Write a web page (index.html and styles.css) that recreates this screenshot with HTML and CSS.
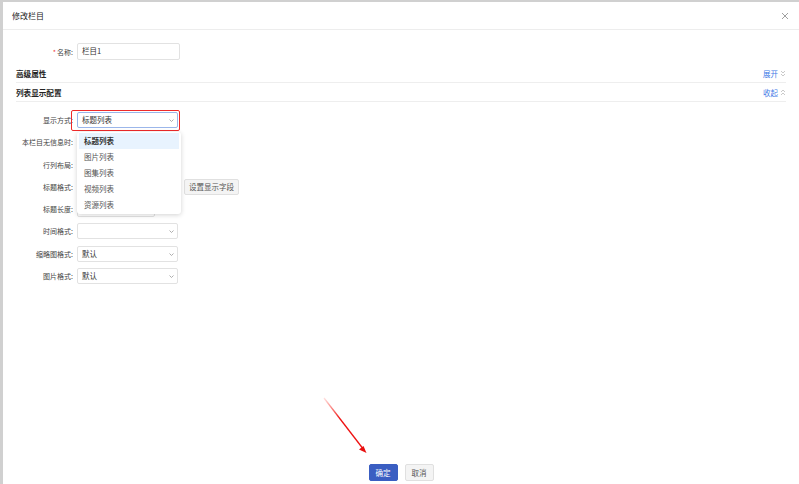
FILE: index.html
```html
<!DOCTYPE html>
<html lang="zh-CN">
<head>
    <meta charset="UTF-8">
    <title>修改栏目</title>
    <link rel="stylesheet" href="styles.css">
</head>
<body>
<div class="modal">
    <div class="modal-header">
        <span class="modal-title">修改栏目</span>
        <svg class="modal-close" width="8" height="8" viewBox="0 0 8 8"><path d="M1 1l6 6M7 1L1 7" stroke="#888" stroke-width="0.8"/></svg>
    </div>

    <div class="modal-body">
        <div class="form-row first">
            <label class="form-label"><i class="req">*</i>名称:</label>
            <div class="input name-input">栏目1</div>
        </div>

        <div class="section-head">
            <span>高级属性</span>
            <a class="toggle">展开
                <svg width="6" height="7" viewBox="0 0 6 7"><path d="M1 1l2 2 2-2M1 4l2 2 2-2" fill="none" stroke="#bbb" stroke-width="0.8"/></svg>
            </a>
        </div>
        <div class="section-head">
            <span>列表显示配置</span>
            <a class="toggle">收起
                <svg width="6" height="7" viewBox="0 0 6 7"><path d="M1 3l2-2 2 2M1 6l2-2 2 2" fill="none" stroke="#bbb" stroke-width="0.8"/></svg>
            </a>
        </div>

        <div class="form-list">
            <div class="form-row">
                <label class="form-label">显示方式:</label>
                <div class="select-wrap">
                    <div class="input select active">标题列表
                        <svg class="arrow" width="5" height="3" viewBox="0 0 5 3"><path d="M0.5 0.5l2 2 2-2" fill="none" stroke="#999" stroke-width="0.8"/></svg>
                    </div>
                    <span class="highlight-box"></span>
                    <ul class="dropdown">
                        <li class="selected">标题列表</li>
                        <li>图片列表</li>
                        <li>图集列表</li>
                        <li>视频列表</li>
                        <li>资源列表</li>
                    </ul>
                </div>
            </div>
            <div class="form-row">
                <label class="form-label">本栏目无信息时:</label>
                <div class="input select"></div>
            </div>
            <div class="form-row">
                <label class="form-label">行列布局:</label>
                <div class="input select"></div>
            </div>
            <div class="form-row">
                <label class="form-label">标题格式:</label>
                <div class="input select"></div>
                <button class="btn btn-small">设置显示字段</button>
            </div>
            <div class="form-row">
                <label class="form-label">标题长度:</label>
                <div class="input short"></div>
            </div>
            <div class="form-row">
                <label class="form-label">时间格式:</label>
                <div class="input select">
                    <svg class="arrow" width="5" height="3" viewBox="0 0 5 3"><path d="M0.5 0.5l2 2 2-2" fill="none" stroke="#999" stroke-width="0.8"/></svg>
                </div>
            </div>
            <div class="form-row">
                <label class="form-label">缩略图格式:</label>
                <div class="input select">默认
                    <svg class="arrow" width="5" height="3" viewBox="0 0 5 3"><path d="M0.5 0.5l2 2 2-2" fill="none" stroke="#999" stroke-width="0.8"/></svg>
                </div>
            </div>
            <div class="form-row">
                <label class="form-label">图片格式:</label>
                <div class="input select">默认
                    <svg class="arrow" width="5" height="3" viewBox="0 0 5 3"><path d="M0.5 0.5l2 2 2-2" fill="none" stroke="#999" stroke-width="0.8"/></svg>
                </div>
            </div>
        </div>
    </div>

    <div class="modal-footer">
        <button class="btn btn-primary">确定</button>
        <button class="btn">取消</button>
    </div>

    <!-- annotation arrow -->
    <svg class="annotation" width="60" height="70" viewBox="0 0 60 70">
        <defs>
            <linearGradient id="fade" x1="0" y1="0" x2="1" y2="1">
                <stop offset="0" stop-color="#ff3b30" stop-opacity="0.15"/>
                <stop offset="0.4" stop-color="#ee1111"/>
            </linearGradient>
        </defs>
        <path d="M2 2L42 54" stroke="url(#fade)" stroke-width="1.3" fill="none"/>
        <path d="M44.5 57L37 53.5L41.5 50Z" fill="#e81010"/>
    </svg>
</div>
</body>
</html>
```

FILE: styles.css
```css
/* page */
body {
    margin: 0;
    padding: 2px 0 0 3px;
    width: 799px;
    height: 484px;
    box-sizing: border-box;
    background: #d0d0d0;
    font-family: "Noto Sans CJK SC", "Noto Sans", sans-serif;
    color: #333;
    overflow: hidden;
}

.modal {
    position: relative;
    height: 482px;
    background: #fff;
    display: flex;
    flex-direction: column;
}

.modal-header {
    height: 27px;
    border-bottom: 1px solid #ededed;
    display: flex;
    align-items: center;
    justify-content: space-between;
    padding: 0 10px 0 9px;
}

.modal-title {
    font-size: 8px;
    color: #222;
}

.modal-body {
    flex: 1;
    padding: 13px 13px 0 13px;
}

/* form rows */
.form-row {
    display: flex;
    align-items: center;
    height: 16px;
    margin-bottom: 6.3px;
}

.form-row.first {
    height: 17px;
    margin-bottom: 4px;
}

.form-label {
    width: 57px;
    padding-right: 4px;
    text-align: right;
    font-size: 7px;
    color: #444;
    white-space: nowrap;
}

.req {
    font-style: normal;
    color: #f04040;
    margin-right: 1px;
}

.input {
    position: relative;
    box-sizing: border-box;
    height: 100%;
    width: 101px;
    border: 1px solid #e2e2e2;
    border-radius: 2px;
    padding-left: 4px;
    font-size: 7.5px;
    line-height: 14px;
    color: #333;
    background: #fff;
}

.name-input {
    width: 103px;
}

.input.short {
    width: 78px;
}

.input.active {
    border-color: #9bb6ea;
}

.arrow {
    position: absolute;
    right: 3px;
    top: 6px;
}

/* sections */
.section-head {
    height: 18px;
    border-bottom: 1px solid #eeeeee;
    display: flex;
    align-items: center;
    justify-content: space-between;
    font-size: 7.6px;
    font-weight: bold;
    color: #222;
}

.toggle {
    display: flex;
    align-items: center;
    gap: 2px;
    font-weight: normal;
    font-size: 7.5px;
    color: #3f7be6;
}

.form-list {
    margin-top: 10px;
}

/* dropdown */
.select-wrap {
    position: relative;
    height: 100%;
}

.highlight-box {
    position: absolute;
    left: -6px;
    top: -2px;
    right: -2px;
    bottom: -3px;
    border: 1.5px solid #ee2a2a;
    border-radius: 2px;
}

.dropdown {
    position: absolute;
    z-index: 2;
    left: 0;
    top: 20px;
    width: 104px;
    box-sizing: border-box;
    margin: 0;
    padding: 1px 2px;
    list-style: none;
    background: #fff;
    border-radius: 3px;
    box-shadow: 0 1px 5px rgba(0, 0, 0, 0.18);
}

.dropdown li {
    height: 16px;
    line-height: 16px;
    padding-left: 5px;
    font-size: 7.5px;
    color: #555;
}

.dropdown li.selected {
    background: #e8f3fe;
    font-weight: bold;
    color: #333;
}

/* buttons */
.btn {
    box-sizing: border-box;
    height: 17px;
    padding: 0 5px;
    border: 1px solid #e0e0e0;
    border-radius: 2px;
    background: #f4f4f4;
    font-family: inherit;
    font-size: 7.5px;
    color: #555;
}

.btn-small {
    height: 16px;
    margin-left: 6px;
    padding: 0 4px;
}

.btn-primary {
    background: #3a5ec2;
    border-color: #3a5ec2;
    color: #fff;
}

.modal-footer {
    display: flex;
    justify-content: center;
    gap: 7px;
    padding-bottom: 3px;
}

.modal-footer .btn {
    width: 29px;
    padding: 0;
}

.annotation {
    position: absolute;
    left: 319px;
    top: 394px;
}
```
